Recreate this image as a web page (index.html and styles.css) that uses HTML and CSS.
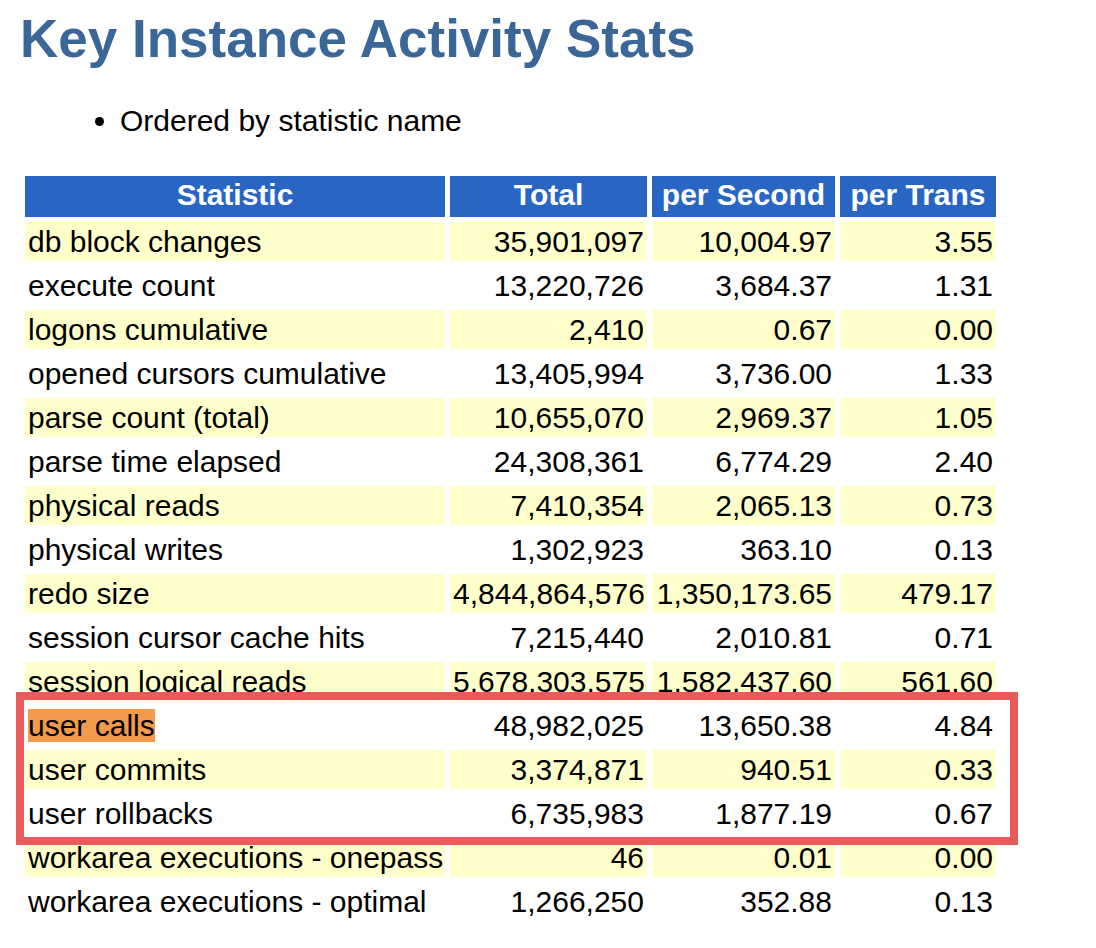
FILE: index.html
```html
<!DOCTYPE html>
<html lang="en">
<head>
<meta charset="utf-8">
<title>Key Instance Activity Stats</title>
<link rel="stylesheet" href="styles.css">
</head>
<body>
<div class="page">
  <h2 class="title">Key Instance Activity Stats</h2>
  <ul class="notes">
    <li>Ordered by statistic name</li>
  </ul>
  <table class="stats">
    <colgroup>
      <col class="c-name">
      <col class="c-total">
      <col class="c-sec">
      <col class="c-trans">
    </colgroup>
    <thead>
      <tr><th>Statistic</th><th>Total</th><th>per Second</th><th>per Trans</th></tr>
    </thead>
    <tbody>
      <tr class="alt"><td>db block changes</td><td class="num">35,901,097</td><td class="num">10,004.97</td><td class="num">3.55</td></tr>
      <tr><td>execute count</td><td class="num">13,220,726</td><td class="num">3,684.37</td><td class="num">1.31</td></tr>
      <tr class="alt"><td>logons cumulative</td><td class="num">2,410</td><td class="num">0.67</td><td class="num">0.00</td></tr>
      <tr><td>opened cursors cumulative</td><td class="num">13,405,994</td><td class="num">3,736.00</td><td class="num">1.33</td></tr>
      <tr class="alt"><td>parse count (total)</td><td class="num">10,655,070</td><td class="num">2,969.37</td><td class="num">1.05</td></tr>
      <tr><td>parse time elapsed</td><td class="num">24,308,361</td><td class="num">6,774.29</td><td class="num">2.40</td></tr>
      <tr class="alt"><td>physical reads</td><td class="num">7,410,354</td><td class="num">2,065.13</td><td class="num">0.73</td></tr>
      <tr><td>physical writes</td><td class="num">1,302,923</td><td class="num">363.10</td><td class="num">0.13</td></tr>
      <tr class="alt"><td>redo size</td><td class="num">4,844,864,576</td><td class="num">1,350,173.65</td><td class="num">479.17</td></tr>
      <tr><td>session cursor cache hits</td><td class="num">7,215,440</td><td class="num">2,010.81</td><td class="num">0.71</td></tr>
      <tr class="alt"><td>session logical reads</td><td class="num">5,678,303,575</td><td class="num">1,582,437.60</td><td class="num">561.60</td></tr>
      <tr><td><span class="mark">user calls</span></td><td class="num">48,982,025</td><td class="num">13,650.38</td><td class="num">4.84</td></tr>
      <tr class="alt"><td>user commits</td><td class="num">3,374,871</td><td class="num">940.51</td><td class="num">0.33</td></tr>
      <tr><td>user rollbacks</td><td class="num">6,735,983</td><td class="num">1,877.19</td><td class="num">0.67</td></tr>
      <tr class="alt"><td>workarea executions - onepass</td><td class="num">46</td><td class="num">0.01</td><td class="num">0.00</td></tr>
      <tr><td>workarea executions - optimal</td><td class="num">1,266,250</td><td class="num">352.88</td><td class="num">0.13</td></tr>
    </tbody>
  </table>
  <div class="callout"></div>
</div>
</body>
</html>
```

FILE: styles.css
```css
html, body {
  margin: 0;
  padding: 0;
  background: #ffffff;
}

body {
  font-family: "Liberation Sans", Arial, Helvetica, sans-serif;
  color: #000000;
}

.page {
  position: relative;
  padding: 8px 0 0 20px;
}

.title {
  margin: 0;
  font-size: 53px;
  font-weight: bold;
  line-height: 62px;
  color: #3b6798;
}

.notes {
  margin: 33px 0 0 0;
  padding: 0 0 0 100px;
  font-size: 30px;
  line-height: 35px;
  list-style: disc;
}

.stats {
  margin-top: 33px;
  border-collapse: separate;
  border-spacing: 5px;
  table-layout: fixed;
  width: 981px;
  font-size: 30px;
}

.c-name { width: 420px; }
.c-total { width: 197px; }
.c-sec { width: 183px; }
.c-trans { width: 156px; }

.stats th {
  background: #2966c4;
  color: #ffffff;
  font-weight: bold;
  line-height: 35px;
  padding: 1px 3px 5px 3px;
  text-align: center;
  white-space: nowrap;
  overflow: hidden;
}

.stats td {
  line-height: 34px;
  padding: 3px 3px 2px 3px;
  white-space: nowrap;
  vertical-align: top;
  background: #ffffff;
}

.stats tr.alt td {
  background: #ffffcc;
}

.stats td.num {
  text-align: right;
}

.mark {
  background: #f39a4c;
}

.callout {
  position: absolute;
  left: 16px;
  top: 692px;
  width: 1002px;
  height: 153px;
  box-sizing: border-box;
  border: 8px solid #e95b5b;
  pointer-events: none;
}
```
